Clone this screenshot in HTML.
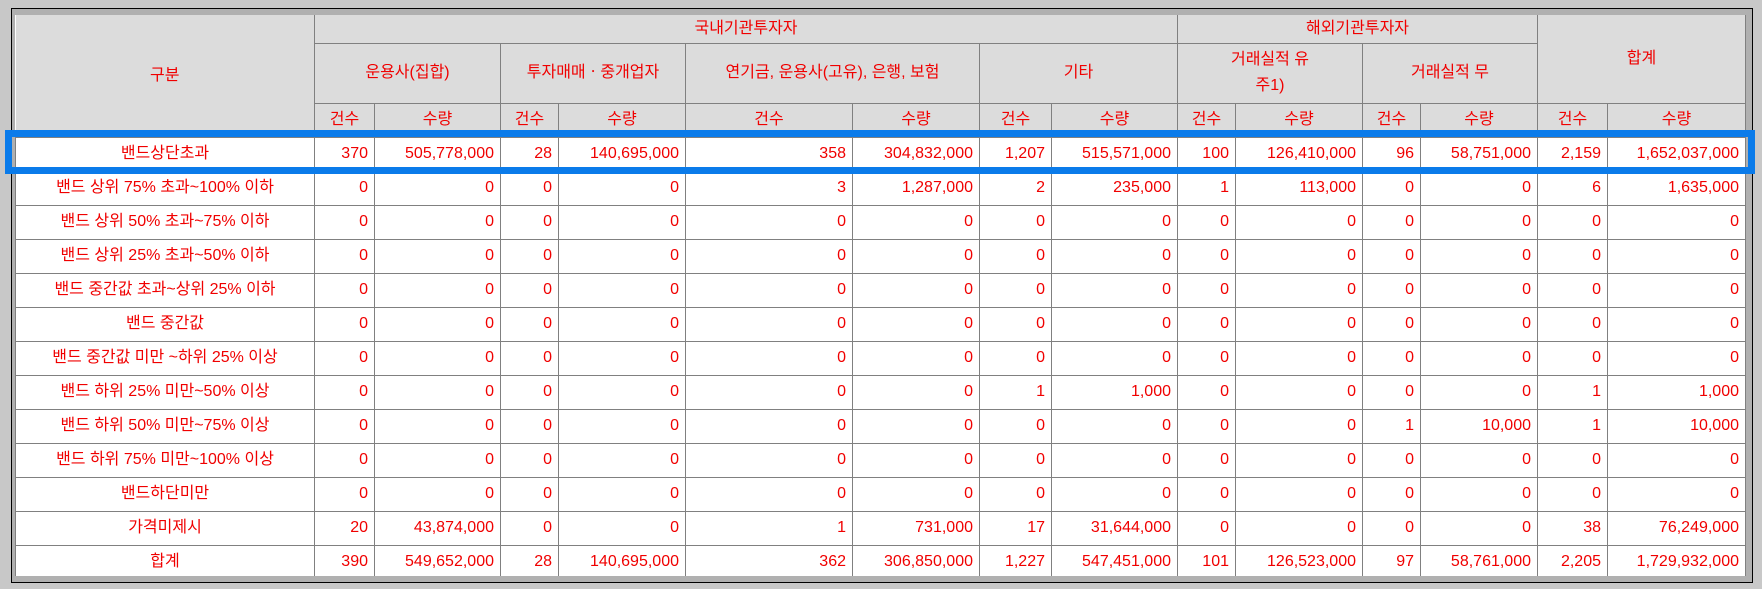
<!DOCTYPE html>
<html><head><meta charset="utf-8"><style>
html,body{margin:0;padding:0;background:#c8c8c8;width:1762px;height:589px;overflow:hidden;position:relative}
.frame{position:absolute;left:11px;top:8px;width:1740px;height:573px;border:1px solid #000;background:#b0b0b0;overflow:hidden}
.inner{position:absolute;left:3px;top:6px;width:1731px;height:561px;overflow:hidden;background:#fff}
table{border-collapse:collapse;table-layout:fixed;font-family:"Liberation Sans","Noto Sans CJK KR","NanumGothic",sans-serif;font-size:16px;color:#f00000}
td{border:1px solid #808080;padding:0 6px 0 0;text-align:right;white-space:nowrap;overflow:hidden;background:#fff;line-height:18px;vertical-align:middle;box-sizing:border-box}
tr.d{height:34px}
td.l{text-align:center;padding:0}
.h td{background:#dcdcdc;text-align:center;padding:0}
.blue{position:absolute;left:5px;top:130px;width:1736px;height:30px;border:7px solid #0a7bea}
</style></head><body>
<div class="frame"><div class="inner">
<table>
<colgroup><col style="width:299px"><col style="width:60px"><col style="width:126px"><col style="width:58px"><col style="width:127px"><col style="width:167px"><col style="width:127px"><col style="width:72px"><col style="width:126px"><col style="width:58px"><col style="width:127px"><col style="width:58px"><col style="width:117px"><col style="width:70px"><col style="width:138px"></colgroup>
<tr class="h" style="height:28px"><td rowspan="3" style="border-top:none;border-left:none">구분</td><td colspan="8" style="border-top:none">국내기관투자자</td><td colspan="4" style="border-top:none">해외기관투자자</td><td colspan="2" rowspan="2" style="border-top:none">합계</td></tr>
<tr class="h" style="height:60px"><td colspan="2">운용사(집합)</td><td colspan="2">투자매매ㆍ중개업자</td><td colspan="2">연기금, 운용사(고유), 은행, 보험</td><td colspan="2">기타</td><td colspan="2" style="line-height:26px">거래실적 유<br>주1)</td><td colspan="2">거래실적 무</td></tr>
<tr class="h" style="height:34px"><td>건수</td><td>수량</td><td>건수</td><td>수량</td><td>건수</td><td>수량</td><td>건수</td><td>수량</td><td>건수</td><td>수량</td><td>건수</td><td>수량</td><td>건수</td><td>수량</td></tr>
<tr class="d"><td class="l">밴드상단초과</td><td>370</td><td>505,778,000</td><td>28</td><td>140,695,000</td><td>358</td><td>304,832,000</td><td>1,207</td><td>515,571,000</td><td>100</td><td>126,410,000</td><td>96</td><td>58,751,000</td><td>2,159</td><td>1,652,037,000</td></tr>
<tr class="d"><td class="l">밴드 상위 75% 초과~100% 이하</td><td>0</td><td>0</td><td>0</td><td>0</td><td>3</td><td>1,287,000</td><td>2</td><td>235,000</td><td>1</td><td>113,000</td><td>0</td><td>0</td><td>6</td><td>1,635,000</td></tr>
<tr class="d"><td class="l">밴드 상위 50% 초과~75% 이하</td><td>0</td><td>0</td><td>0</td><td>0</td><td>0</td><td>0</td><td>0</td><td>0</td><td>0</td><td>0</td><td>0</td><td>0</td><td>0</td><td>0</td></tr>
<tr class="d"><td class="l">밴드 상위 25% 초과~50% 이하</td><td>0</td><td>0</td><td>0</td><td>0</td><td>0</td><td>0</td><td>0</td><td>0</td><td>0</td><td>0</td><td>0</td><td>0</td><td>0</td><td>0</td></tr>
<tr class="d"><td class="l">밴드 중간값 초과~상위 25% 이하</td><td>0</td><td>0</td><td>0</td><td>0</td><td>0</td><td>0</td><td>0</td><td>0</td><td>0</td><td>0</td><td>0</td><td>0</td><td>0</td><td>0</td></tr>
<tr class="d"><td class="l">밴드 중간값</td><td>0</td><td>0</td><td>0</td><td>0</td><td>0</td><td>0</td><td>0</td><td>0</td><td>0</td><td>0</td><td>0</td><td>0</td><td>0</td><td>0</td></tr>
<tr class="d"><td class="l">밴드 중간값 미만 ~하위 25% 이상</td><td>0</td><td>0</td><td>0</td><td>0</td><td>0</td><td>0</td><td>0</td><td>0</td><td>0</td><td>0</td><td>0</td><td>0</td><td>0</td><td>0</td></tr>
<tr class="d"><td class="l">밴드 하위 25% 미만~50% 이상</td><td>0</td><td>0</td><td>0</td><td>0</td><td>0</td><td>0</td><td>1</td><td>1,000</td><td>0</td><td>0</td><td>0</td><td>0</td><td>1</td><td>1,000</td></tr>
<tr class="d"><td class="l">밴드 하위 50% 미만~75% 이상</td><td>0</td><td>0</td><td>0</td><td>0</td><td>0</td><td>0</td><td>0</td><td>0</td><td>0</td><td>0</td><td>1</td><td>10,000</td><td>1</td><td>10,000</td></tr>
<tr class="d"><td class="l">밴드 하위 75% 미만~100% 이상</td><td>0</td><td>0</td><td>0</td><td>0</td><td>0</td><td>0</td><td>0</td><td>0</td><td>0</td><td>0</td><td>0</td><td>0</td><td>0</td><td>0</td></tr>
<tr class="d"><td class="l">밴드하단미만</td><td>0</td><td>0</td><td>0</td><td>0</td><td>0</td><td>0</td><td>0</td><td>0</td><td>0</td><td>0</td><td>0</td><td>0</td><td>0</td><td>0</td></tr>
<tr class="d"><td class="l">가격미제시</td><td>20</td><td>43,874,000</td><td>0</td><td>0</td><td>1</td><td>731,000</td><td>17</td><td>31,644,000</td><td>0</td><td>0</td><td>0</td><td>0</td><td>38</td><td>76,249,000</td></tr>
<tr class="d"><td class="l">합계</td><td>390</td><td>549,652,000</td><td>28</td><td>140,695,000</td><td>362</td><td>306,850,000</td><td>1,227</td><td>547,451,000</td><td>101</td><td>126,523,000</td><td>97</td><td>58,761,000</td><td>2,205</td><td>1,729,932,000</td></tr>
</table>
</div></div>
<div class="blue"></div>
</body></html>
